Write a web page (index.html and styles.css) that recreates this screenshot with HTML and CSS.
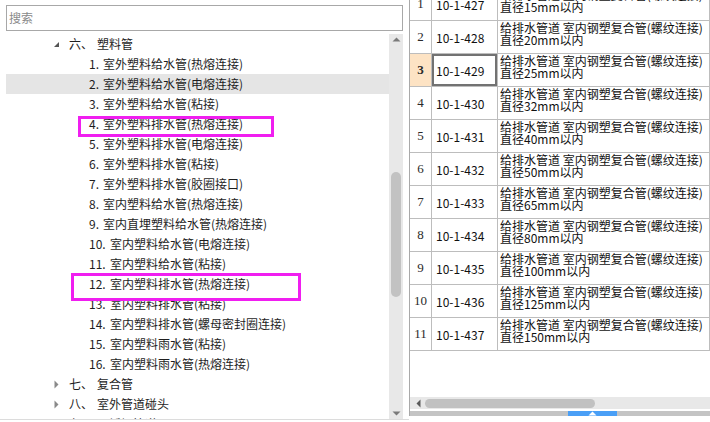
FILE: index.html
```html
<!DOCTYPE html>
<html lang="zh-CN">
<head>
<meta charset="utf-8">
<title>定额树</title>
<link rel="stylesheet" href="styles.css">
</head>
<body>
<div class="app">
  <div class="left">
    <div class="search">搜索</div>
    <div class="treebox">
      <div class="tree">
        <div class="node lvl1"><svg class="tw" width="7" height="7" viewBox="0 0 7 7"><path d="M6 1V6H1Z" fill="#555"/></svg><span class="sn">六、</span>塑料管</div>
        <div class="node lvl2"><span class="num">1.</span>室外塑料给水管(热熔连接)</div>
        <div class="node lvl2 hover"><span class="num">2.</span>室外塑料给水管(电熔连接)</div>
        <div class="node lvl2"><span class="num">3.</span>室外塑料给水管(粘接)</div>
        <div class="node lvl2"><span class="num">4.</span>室外塑料排水管(热熔连接)</div>
        <div class="node lvl2"><span class="num">5.</span>室外塑料排水管(电熔连接)</div>
        <div class="node lvl2"><span class="num">6.</span>室外塑料排水管(粘接)</div>
        <div class="node lvl2"><span class="num">7.</span>室外塑料排水管(胶圈接口)</div>
        <div class="node lvl2"><span class="num">8.</span>室内塑料给水管(热熔连接)</div>
        <div class="node lvl2"><span class="num">9.</span>室内直埋塑料给水管(热熔连接)</div>
        <div class="node lvl2"><span class="num w">10.</span>室内塑料给水管(电熔连接)</div>
        <div class="node lvl2"><span class="num w">11.</span>室内塑料给水管(粘接)</div>
        <div class="node lvl2"><span class="num w">12.</span>室内塑料排水管(热熔连接)</div>
        <div class="node lvl2"><span class="num w">13.</span>室内塑料排水管(粘接)</div>
        <div class="node lvl2"><span class="num w">14.</span>室内塑料排水管(螺母密封圈连接)</div>
        <div class="node lvl2"><span class="num w">15.</span>室内塑料雨水管(粘接)</div>
        <div class="node lvl2"><span class="num w">16.</span>室内塑料雨水管(热熔连接)</div>
        <div class="node lvl1"><svg class="tw" width="7" height="9" viewBox="0 0 7 9"><path d="M1.5 0.5L5.5 4.5L1.5 8.5Z" fill="#8a8a8a"/></svg><span class="sn">七、</span>复合管</div>
        <div class="node lvl1"><svg class="tw" width="7" height="9" viewBox="0 0 7 9"><path d="M1.5 0.5L5.5 4.5L1.5 8.5Z" fill="#8a8a8a"/></svg><span class="sn">八、</span>室外管道碰头</div>
        <div class="node lvl1"><svg class="tw" width="7" height="9" viewBox="0 0 7 9"><path d="M1.5 0.5L5.5 4.5L1.5 8.5Z" fill="#8a8a8a"/></svg><span class="sn">九、</span>不锈钢管道</div>
      </div>
      <div class="vscroll">
        <svg class="arrow" width="9" height="5" viewBox="0 0 9 5"><path d="M0.5 4.5L4.5 0.5L8.5 4.5Z" fill="#7a7a7a"/></svg>
        <div class="vtrack"><div class="vthumb"></div></div>
        <svg class="arrow" width="9" height="5" viewBox="0 0 9 5"><path d="M0.5 0.5L4.5 4.5L8.5 0.5Z" fill="#7a7a7a"/></svg>
      </div>
    </div>
    <div class="leftfoot"></div>
    <div class="mark mark1"></div>
    <div class="mark mark2"></div>
  </div>
  <div class="right">
    <div class="grid">
      <div class="rows">
        <div class="row"><div class="c rn">1</div><div class="c code">10-1-427</div><div class="c desc">给排水管道 室内钢塑复合管(螺纹连接)<br>直径15mm以内</div></div>
        <div class="row"><div class="c rn">2</div><div class="c code">10-1-428</div><div class="c desc">给排水管道 室内钢塑复合管(螺纹连接)<br>直径20mm以内</div></div>
        <div class="row sel"><div class="c rn">3</div><div class="c code">10-1-429</div><div class="c desc">给排水管道 室内钢塑复合管(螺纹连接)<br>直径25mm以内</div></div>
        <div class="row"><div class="c rn">4</div><div class="c code">10-1-430</div><div class="c desc">给排水管道 室内钢塑复合管(螺纹连接)<br>直径32mm以内</div></div>
        <div class="row"><div class="c rn">5</div><div class="c code">10-1-431</div><div class="c desc">给排水管道 室内钢塑复合管(螺纹连接)<br>直径40mm以内</div></div>
        <div class="row"><div class="c rn">6</div><div class="c code">10-1-432</div><div class="c desc">给排水管道 室内钢塑复合管(螺纹连接)<br>直径50mm以内</div></div>
        <div class="row"><div class="c rn">7</div><div class="c code">10-1-433</div><div class="c desc">给排水管道 室内钢塑复合管(螺纹连接)<br>直径65mm以内</div></div>
        <div class="row"><div class="c rn">8</div><div class="c code">10-1-434</div><div class="c desc">给排水管道 室内钢塑复合管(螺纹连接)<br>直径80mm以内</div></div>
        <div class="row"><div class="c rn">9</div><div class="c code">10-1-435</div><div class="c desc">给排水管道 室内钢塑复合管(螺纹连接)<br>直径100mm以内</div></div>
        <div class="row"><div class="c rn">10</div><div class="c code">10-1-436</div><div class="c desc">给排水管道 室内钢塑复合管(螺纹连接)<br>直径125mm以内</div></div>
        <div class="row"><div class="c rn">11</div><div class="c code">10-1-437</div><div class="c desc">给排水管道 室内钢塑复合管(螺纹连接)<br>直径150mm以内</div></div>
      </div>
    </div>
    <div class="hscroll">
      <svg class="harrow" width="5" height="9" viewBox="0 0 5 9"><path d="M4.5 0.5L0.5 4.5L4.5 8.5Z" fill="#5a5a5a"/></svg>
      <div class="hthumb"></div>
    </div>
    <div class="rightgap"></div>
    <div class="strip">
      <div class="tab"><svg width="9" height="5" viewBox="0 0 9 5"><path d="M0.5 4.5L4.5 0.5L8.5 4.5Z" fill="#ffffff"/></svg></div>
    </div>
  </div>
</div>
</body>
</html>
```
FILE: styles.css
```css
html, body {
  margin: 0;
  padding: 0;
  background: #ffffff;
}
body {
  width: 710px;
  height: 422px;
  overflow: hidden;
  font-family: "Noto Sans CJK SC", "Noto Sans", sans-serif;
  font-size: 12px;
  color: #1e1e1e;
}
.app {
  display: flex;
  width: 710px;
  height: 422px;
}
.left {
  position: relative;
  width: 409px;
  height: 422px;
  flex: none;
  display: flex;
  flex-direction: column;
}
.search {
  box-sizing: border-box;
  margin: 5px 6px 3px 6px;
  height: 26px;
  border: 1px solid #a8a8a8;
  color: #8a8a8a;
  line-height: 24px;
  padding-left: 2px;
}
.treebox {
  display: flex;
  margin-left: 6px;
  width: 397px;
  height: 385px;
  overflow: hidden;
}
.tree {
  flex: 1;
  overflow: hidden;
}
.node {
  height: 20px;
  line-height: 20px;
  white-space: nowrap;
  display: flex;
  align-items: center;
}
.node.hover {
  background: #e5e5e5;
}
.lvl1 {
  padding-left: 47px;
}
.tw {
  width: 7px;
  flex: none;
  margin-right: 9px;
}
.sn {
  display: inline-block;
  width: 28px;
}
.lvl2 {
  padding-left: 83px;
}
.num {
  display: inline-block;
  width: 14px;
}
.num.w {
  width: 21px;
}
.vscroll {
  width: 14px;
  flex: none;
  background: #e8e8e8;
  display: flex;
  flex-direction: column;
  align-items: center;
}
.arrow {
  flex: none;
  margin: 3px 0;
}
.vtrack {
  flex: 1;
  width: 100%;
  display: flex;
  justify-content: center;
}
.vthumb {
  margin-top: 127px;
  width: 10px;
  height: 125px;
  border-radius: 5px;
  background: #c2c2c2;
}
.leftfoot {
  height: 1px;
  background: #dcdcdc;
}
.mark {
  position: absolute;
  box-sizing: border-box;
  border: 3px solid #f01ef0;
}
.mark1 {
  left: 78px;
  top: 116px;
  width: 196px;
  height: 21px;
}
.mark2 {
  left: 71px;
  top: 273px;
  width: 230px;
  height: 28px;
}
.right {
  flex: 1;
  display: flex;
  flex-direction: column;
  border-left: 1px solid #a9a9a9;
  height: 416px;
  overflow: hidden;
  position: relative;
}
.grid {
  height: 402px;
  overflow: hidden;
}
.rows {
  margin-top: -12px;
}
.row {
  display: grid;
  grid-template-columns: 22px 66px 1fr;
  height: 33px;
}
.c {
  box-sizing: border-box;
  border-right: 1px solid #bdbdbd;
  border-bottom: 1px solid #bdbdbd;
  overflow: hidden;
  white-space: nowrap;
}
.rn {
  display: flex;
  align-items: center;
  justify-content: center;
  color: #2a2a2a;
  font-family: "Liberation Serif", "Noto Sans CJK SC", serif;
  font-size: 13px;
}
.code {
  display: flex;
  align-items: center;
  padding-left: 4px;
  color: #111;
}
.desc {
  padding: 1px 0 0 2px;
  line-height: 12px;
  color: #111;
}
.sel .rn {
  background: #fde3c4;
  font-weight: bold;
}
.sel .code {
  box-shadow: inset 0 0 0 2px #727272, inset 2px 0 0 0 #3f8fea;
}
.hscroll {
  height: 12px;
  background: #e8e8e8;
  display: flex;
  align-items: center;
  flex: none;
}
.harrow {
  margin-left: 6px;
  margin-right: 4px;
}
.hthumb {
  width: 170px;
  height: 9px;
  border-radius: 5px;
  background: #c1c1c1;
}
.rightgap {
  height: 2px;
  flex: none;
}
.strip {
  height: 5px;
  flex: none;
  background: #c4c4c4;
  position: relative;
}
.tab {
  position: absolute;
  left: 158px;
  top: 0;
  width: 49px;
  height: 5px;
  background: #4a9ff6;
  display: flex;
  justify-content: center;
  align-items: center;
}
.tab svg {
  display: block;
}
```
